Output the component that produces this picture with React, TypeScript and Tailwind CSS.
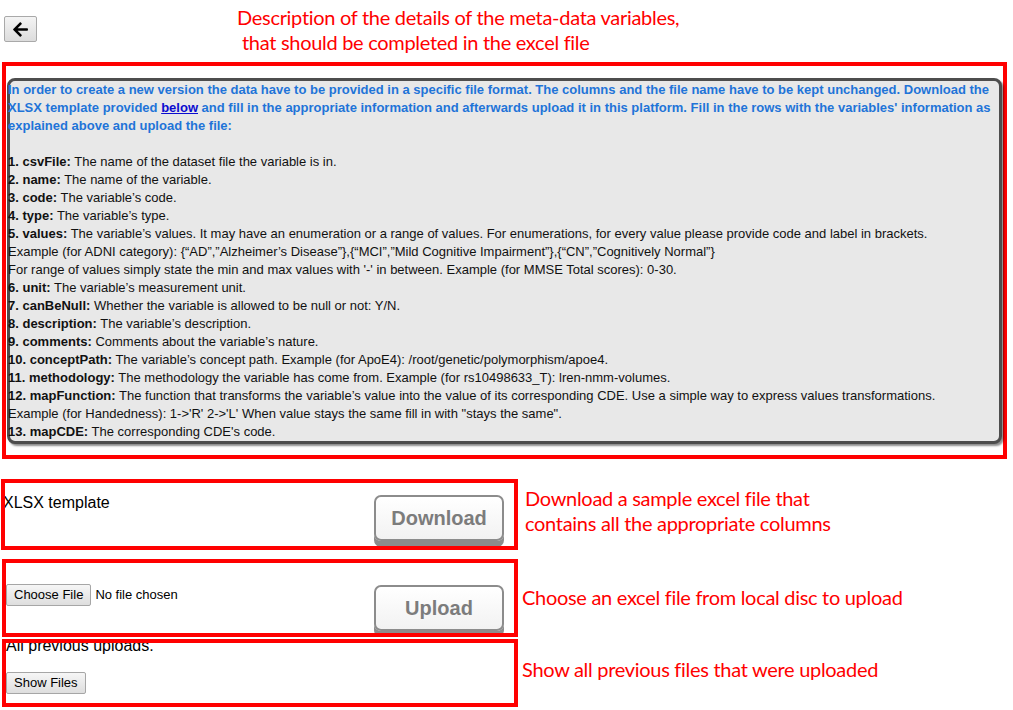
import React from 'react';
import { FaArrowLeft } from 'react-icons/fa';

const items: { label?: string; text: string }[] = [
  { label: '1. csvFile:', text: ' The name of the dataset file the variable is in.' },
  { label: '2. name:', text: ' The name of the variable.' },
  { label: '3. code:', text: ' The variable’s code.' },
  { label: '4. type:', text: ' The variable’s type.' },
  {
    label: '5. values:',
    text: ' The variable’s values. It may have an enumeration or a range of values. For enumerations, for every value please provide code and label in brackets.',
  },
  { text: 'Example (for ADNI category): {“AD”,”Alzheimer’s Disease”},{“MCI”,”Mild Cognitive Impairment”},{“CN”,”Cognitively Normal”}' },
  { text: "For range of values simply state the min and max values with '-' in between. Example (for MMSE Total scores): 0-30." },
  { label: '6. unit:', text: ' The variable’s measurement unit.' },
  { label: '7. canBeNull:', text: ' Whether the variable is allowed to be null or not: Y/N.' },
  { label: '8. description:', text: ' The variable’s description.' },
  { label: '9. comments:', text: ' Comments about the variable’s nature.' },
  { label: '10. conceptPath:', text: ' The variable’s concept path. Example (for ApoE4): /root/genetic/polymorphism/apoe4.' },
  { label: '11. methodology:', text: ' The methodology the variable has come from. Example (for rs10498633_T): lren-nmm-volumes.' },
  {
    label: '12. mapFunction:',
    text: ' The function that transforms the variable’s value into the value of its corresponding CDE. Use a simple way to express values transformations.',
  },
  { text: 'Example (for Handedness): 1->\'R\' 2->\'L\' When value stays the same fill in with "stays the same".' },
  { label: '13. mapCDE:', text: ' The corresponding CDE\'s code.' },
];

const Note: React.FC<{ children: React.ReactNode; className?: string }> = ({ children, className }) => (
  <div className={`font-['Lato',sans-serif] text-[20px] leading-[25px] tracking-[-0.3px] text-[#f00] ${className ?? ''}`}>
    {children}
  </div>
);

const BigButton: React.FC<{ label: string }> = ({ label }) => (
  <button className="w-[130px] h-[46px] rounded-[7px] border-2 border-[#8c8c8c] bg-gradient-to-b from-white to-[#f2f2f2] shadow-[0_6px_0_#8c8c8c] text-[20px] font-bold text-[#7c7c7c]">
    {label}
  </button>
);

const SmallButton: React.FC<{ label: string }> = ({ label }) => (
  <button className="h-[22px] px-[7px] rounded-[2px] border border-[#a6a6a6] bg-gradient-to-b from-[#f6f6f6] to-[#dedede] text-[13px] leading-[18px] text-black">
    {label}
  </button>
);

export default function App() {
  return (
    <div className="w-[1013px] h-[710px] overflow-hidden bg-white font-['Liberation_Sans',Arial,sans-serif] text-black">
      {/* header */}
      <div className="flex h-[62px]">
        <div className="pl-[4px] pt-[16px]">
          <button className="flex w-[33px] h-[26px] items-center justify-center rounded-[2px] border border-[#a9a9a9] bg-gradient-to-b from-[#f4f4f4] to-[#dcdcdc]">
            <FaArrowLeft className="w-[17px] h-[17px] text-black" />
          </button>
        </div>
        <Note className="ml-[200px] pt-[5px] leading-[24px]">
          <p>Description of the details of the meta-data variables,</p>
          <p className="pl-[5px]">that should be completed in the excel file</p>
        </Note>
      </div>

      {/* description */}
      <div className="ml-[2px] w-[1005px] border-4 border-[#f00] pt-[12px] pb-[11px]">
        <div className="ml-[1px] w-[995px] rounded-[8px] border-[3px] border-[#4d4d4d] bg-[#e8e8e8] shadow-[2px_2px_2px_rgba(0,0,0,0.45)] text-[13px] leading-[18px] whitespace-nowrap">
          <div className="-ml-[2px] font-bold text-[#1f74d8]">
            <div>
              In order to create a new version the data have to be provided in a specific file format. The columns and the file name have to be kept unchanged. Download the
            </div>
            <div>
              XLSX template provided <a className="text-[#0b0bd0] underline">below</a> and fill in the appropriate information and afterwards upload it in this platform. Fill in the rows with the variables' information as
            </div>
            <div>explained above and upload the file:</div>
          </div>
          <div className="h-[18px]" />
          <div className="-ml-[2px] text-[#111]">
            {items.map((it, i) => (
              <div key={i}>
                {it.label && <b>{it.label}</b>}
                {it.text}
              </div>
            ))}
          </div>
        </div>
      </div>

      {/* download */}
      <div className="mt-[20px] flex items-center">
        <div className="ml-[1px] w-[517px] h-[71px] border-4 border-[#f00] overflow-hidden flex justify-between">
          <div className="-ml-[2px] pt-[11px] text-[16px] leading-[18px]">XLSX template</div>
          <div className="pt-[12px] pr-[10px]">
            <BigButton label="Download" />
          </div>
        </div>
        <Note className="ml-[7px] -mt-[8px]">
          <p>Download a sample excel file that</p>
          <p>contains all the appropriate columns</p>
        </Note>
      </div>

      {/* upload */}
      <div className="mt-[9px] flex items-center">
        <div className="ml-[2px] w-[516px] h-[78px] border-4 border-[#f00] overflow-hidden flex justify-between">
          <div className="pt-[21px] flex items-start gap-[4px] text-[13px] leading-[22px]">
            <SmallButton label="Choose File" />
            <span>No file chosen</span>
          </div>
          <div className="pt-[22px] pr-[10px]">
            <BigButton label="Upload" />
          </div>
        </div>
        <Note className="ml-[4px] -mt-[2px]">
          <p>Choose an excel file from local disc to upload</p>
        </Note>
      </div>

      {/* previous uploads */}
      <div className="mt-[2px] flex items-center">
        <div className="ml-[2px] w-[516px] h-[68px] border-4 border-[#f00] overflow-hidden">
          <div className="-mt-[6px] text-[16px] leading-[18px]">All previous uploads.</div>
          <div className="mt-[15px]">
            <SmallButton label="Show Files" />
          </div>
        </div>
        <Note className="ml-[4px] -mt-[8px]">
          <p>Show all previous files that were uploaded</p>
        </Note>
      </div>
    </div>
  );
}
